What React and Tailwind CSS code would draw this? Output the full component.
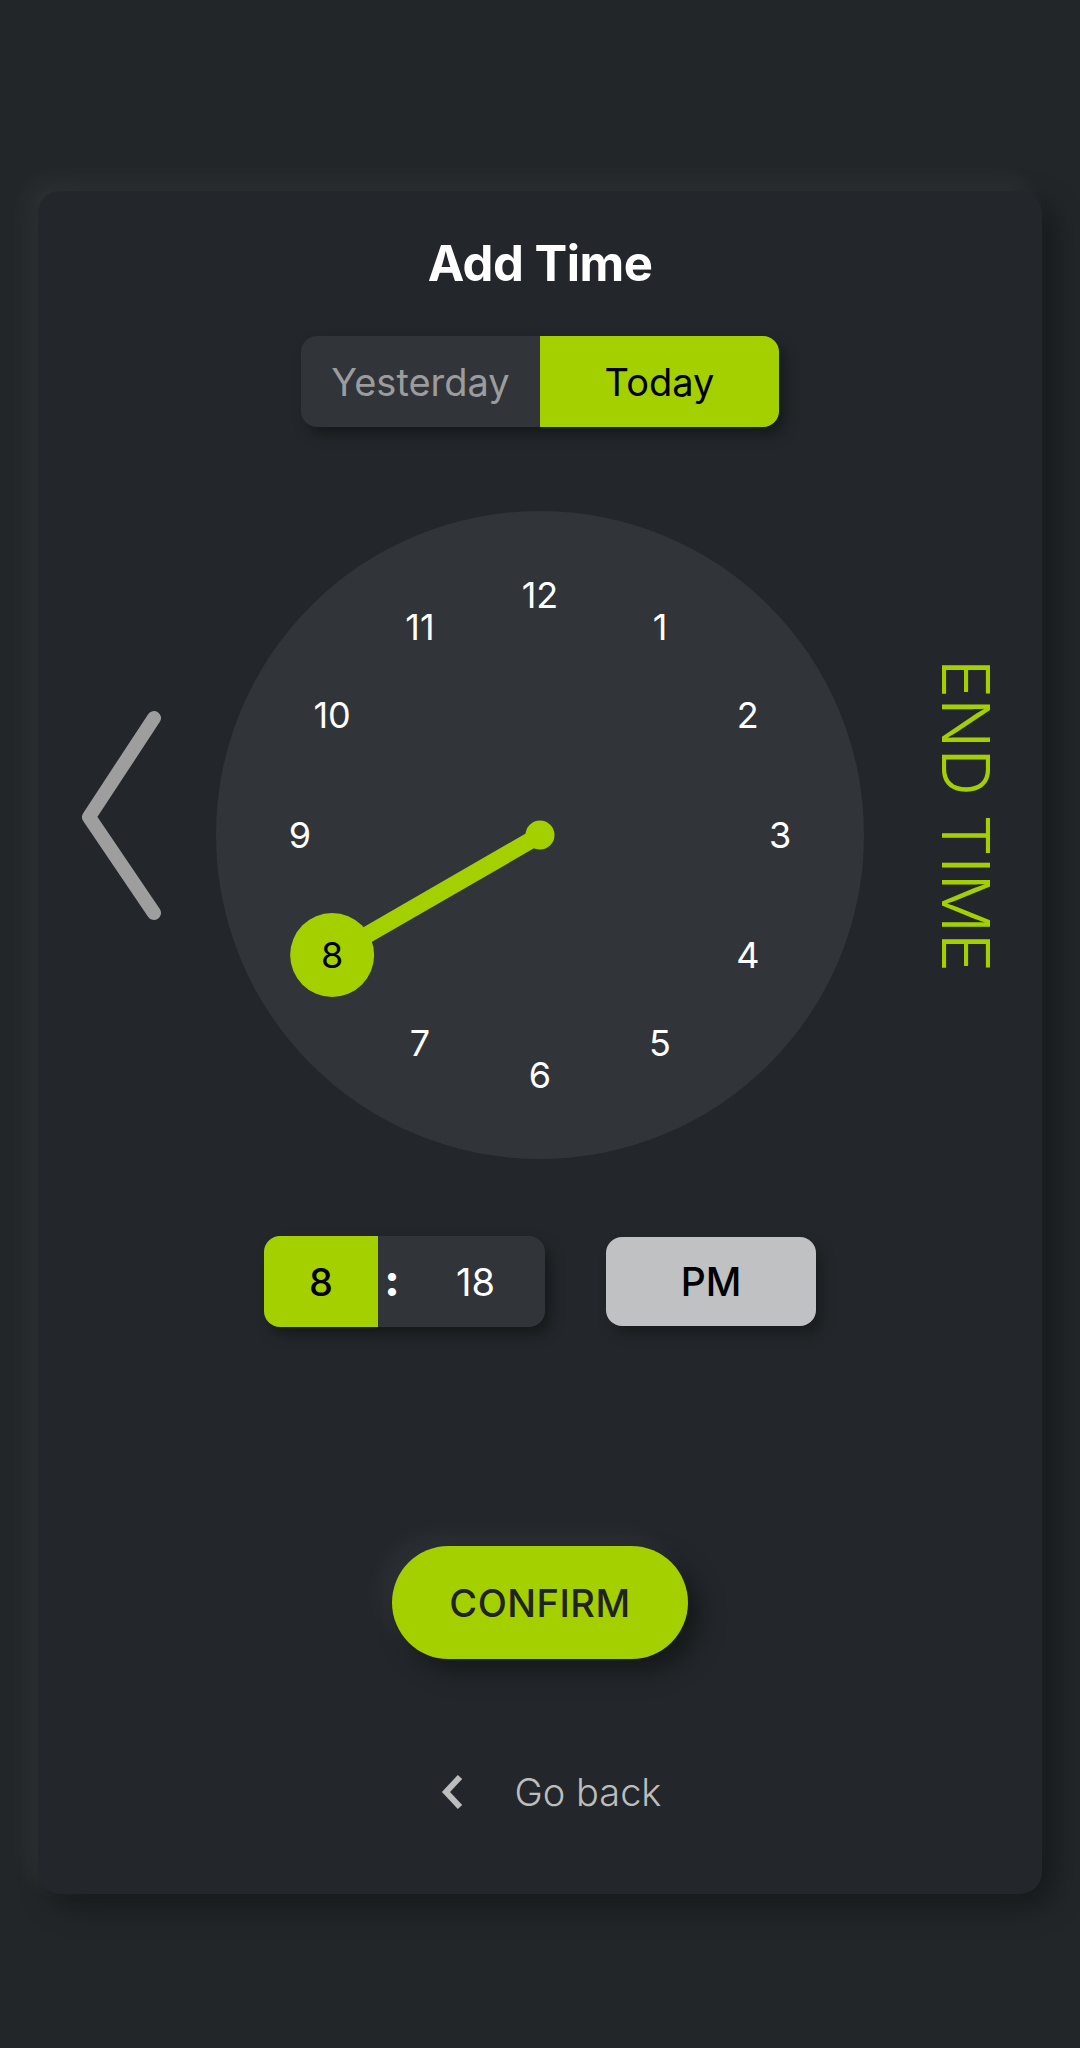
import React, { useState } from "react";

const GREEN = "#a4d000";

const ClockFace = ({ hour }) => {
  const size = 648;
  const c = size / 2;
  const r = 240;
  const hours = [12, 1, 2, 3, 4, 5, 6, 7, 8, 9, 10, 11];
  const ang = (hour % 12) * 30 * (Math.PI / 180);
  const hx = c + r * Math.sin(ang);
  const hy = c - r * Math.cos(ang);

  return (
    <div className="relative w-[648px] h-[648px] rounded-full bg-[#313439] shrink-0">
      <svg className="absolute inset-0" width={size} height={size}>
        <line x1={c} y1={c} x2={hx} y2={hy} stroke={GREEN} strokeWidth="17" />
        <circle cx={c} cy={c} r="14.5" fill={GREEN} />
        <circle cx={hx} cy={hy} r="42" fill={GREEN} />
      </svg>
      {hours.map((h) => {
        const a = (h % 12) * 30 * (Math.PI / 180);
        const x = c + r * Math.sin(a);
        const y = c - r * Math.cos(a);
        return (
          <span
            key={h}
            className={`absolute -translate-x-1/2 -translate-y-1/2 text-[36px] leading-none ${
              h === hour ? "text-black" : "text-white"
            }`}
            style={{ left: x, top: y }}
          >
            {h}
          </span>
        );
      })}
    </div>
  );
};

const App = () => {
  const [day, setDay] = useState("today");

  return (
    <div
      className="min-h-[2048px] bg-[#222629] px-[38px] pt-[191px]"
      style={{ fontFamily: "Inter, 'Noto Sans', sans-serif" }}
    >
      <div className="h-[1703px] rounded-[22px] bg-[#23272b] shadow-[-10px_-10px_26px_rgba(255,255,255,0.06),12px_12px_30px_rgba(0,0,0,0.35)] flex flex-col items-center">
        {/* Title */}
        <h1 className="pt-[48px] h-[145px] text-[49px] leading-none font-bold text-white tracking-[-0.5px]">
          Add Time
        </h1>

        {/* Day toggle */}
        <div className="flex h-[91px] w-[478px] rounded-[16px] overflow-hidden bg-[#313439] shadow-[6px_8px_14px_rgba(0,0,0,0.35)]">
          <button
            onClick={() => setDay("yesterday")}
            className={`flex-1 text-[38px] leading-none ${
              day === "yesterday" ? "bg-[#a4d000] text-black" : "text-[#9c9c9c]"
            }`}
          >
            Yesterday
          </button>
          <button
            onClick={() => setDay("today")}
            className={`flex-1 text-[38px] leading-none ${
              day === "today" ? "bg-[#a4d000] text-black" : "text-[#9c9c9c]"
            }`}
          >
            Today
          </button>
        </div>

        {/* Clock row */}
        <div className="mt-[84px] w-full h-[648px] flex items-center">
          <div className="w-[178px] pl-[42px] mb-[39px]">
            <svg width="84" height="214" viewBox="0 0 84 214">
              <polyline
                points="74,9 9,108 74,204"
                fill="none"
                stroke="#9e9e9e"
                strokeWidth="14"
                strokeLinecap="round"
                strokeLinejoin="round"
              />
            </svg>
          </div>
          <ClockFace hour={8} />
          <div className="flex-1 pl-[69px] mb-[33px]">
            <span className="[writing-mode:vertical-rl] text-[66px] leading-none font-light text-[#a4d000]">
              END TIME
            </span>
          </div>
        </div>

        {/* Time inputs */}
        <div className="mt-[77px] flex gap-[61px]">
          <div className="flex h-[91px] w-[281px] rounded-[16px] overflow-hidden bg-[#313439] shadow-[6px_8px_14px_rgba(0,0,0,0.35)]">
            <div className="w-[114px] bg-[#a4d000] flex items-center justify-center text-[38px] leading-none font-medium text-black">
              8
            </div>
            <div className="w-[28px] flex items-center justify-center text-[44px] leading-none font-extrabold text-white pb-[4px]">
              :
            </div>
            <div className="flex-1 flex items-center justify-center text-[38px] leading-none text-white">
              18
            </div>
          </div>
          <button className="h-[89px] w-[210px] mt-[1px] rounded-[16px] bg-[#c0c1c3] text-[39px] leading-none font-medium text-black shadow-[6px_8px_14px_rgba(0,0,0,0.3)]">
            PM
          </button>
        </div>

        {/* Confirm */}
        <button className="mt-[219px] h-[113px] w-[296px] rounded-full bg-[#a4d000] text-[38px] leading-none font-medium tracking-[0.5px] text-[#1f2326] shadow-[12px_12px_26px_rgba(0,0,0,0.4),-10px_-10px_26px_rgba(255,255,255,0.05)]">
          CONFIRM
        </button>

        {/* Go back */}
        <button className="mt-[103px] h-[60px] pl-[22px] flex items-center gap-[50px] text-[38px] leading-none font-light text-[#bdbdbd]">
          <svg width="24" height="38" viewBox="0 0 24 38">
            <polyline
              points="19,4 5,19 19,34"
              fill="none"
              stroke="#bdbdbd"
              strokeWidth="6"
              strokeLinejoin="miter"
            />
          </svg>
          Go back
        </button>
      </div>
    </div>
  );
};

export default App;
